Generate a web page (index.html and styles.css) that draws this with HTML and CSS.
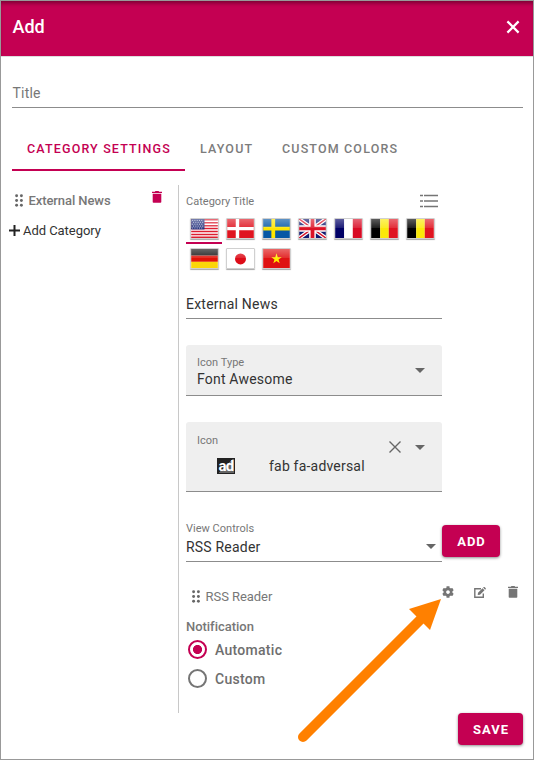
FILE: index.html
```html
<!DOCTYPE html>
<html lang="en">
<head>
<meta charset="utf-8">
<title>Add</title>
<link rel="stylesheet" href="styles.css">
</head>
<body>
<svg class="defs" width="0" height="0" aria-hidden="true">
  <defs>
    <linearGradient id="gloss" x1="0" y1="0" x2="0" y2="1">
      <stop offset="0" stop-color="#fff" stop-opacity=".36"/>
      <stop offset=".5" stop-color="#fff" stop-opacity=".1"/>
      <stop offset=".5" stop-color="#fff" stop-opacity="0"/>
    </linearGradient>
    <symbol id="grip" viewBox="0 0 8 13">
      <circle cx="1.6" cy="1.8" r="1.45"/><circle cx="6.4" cy="1.8" r="1.45"/>
      <circle cx="1.6" cy="6.5" r="1.45"/><circle cx="6.4" cy="6.5" r="1.45"/>
      <circle cx="1.6" cy="11.2" r="1.45"/><circle cx="6.4" cy="11.2" r="1.45"/>
    </symbol>
    <symbol id="trash" viewBox="0 0 10 12">
      <path d="M0 .7h2.9L3.4 0h3.2l.5.7H10V2H0zM.7 2.7h8.6v8.2q0 .8-.8.8h-7q-.8 0-.8-.8z"/>
    </symbol>
    <symbol id="caret" viewBox="0 0 10 5"><path d="M0 0h10L5 5z"/></symbol>
  </defs>
</svg>
<div class="dialog">
  <header class="header">
    <h1>Add</h1>
    <svg class="close" viewBox="0 0 14 14"><path d="M1.4 1.4l11.2 11.2M12.6 1.4L1.4 12.6"/></svg>
  </header>
  <div class="title-field">Title</div>
  <nav class="tabs">
    <a class="tab active">CATEGORY SETTINGS</a>
    <a class="tab layout">LAYOUT</a>
    <a class="tab">CUSTOM COLORS</a>
  </nav>
  <div class="columns">
    <aside class="categories">
      <div class="category">
        <svg class="grip"><use href="#grip"/></svg>
        <span>External News</span>
        <svg class="trash"><use href="#trash"/></svg>
      </div>
      <div class="add-category">
        <svg viewBox="0 0 11 11"><path d="M5.5 0v11M0 5.5h11"/></svg>
        <span>Add Category</span>
      </div>
    </aside>
    <main class="settings">
      <div class="label-row">
        <span class="label">Category Title</span>
        <svg class="list" viewBox="0 0 18 14"><path d="M0 1.5h3M4 1.5h14M0 7h3M4 7h14M0 12.5h3M4 12.5h14"/></svg>
      </div>
      <div class="flags">
        <div class="flag selected"><svg viewBox="0 0 28 20">
          <path fill="#fff" d="M0 0h28v20H0z"/>
          <path stroke="#dc1e30" stroke-width="1.55" d="M0 .8h28M0 3.9h28M0 7h28M0 10h28M0 13.1h28M0 16.2h28M0 19.2h28"/>
          <path fill="#27357f" d="M0 0h14v11H0z"/>
          <path stroke="#c9cde3" stroke-width="1" stroke-dasharray="1 1.4" d="M1 1.5h12M2 3.5h11M1 5.5h12M2 7.5h11M1 9.5h12"/>
          <path class="gloss" d="M0 0h28v20H0z"/></svg></div>
        <div class="flag"><svg viewBox="0 0 28 20">
          <path fill="#df1420" d="M0 0h28v20H0z"/><path fill="#fff" d="M9 0h3.6v20H9zM0 8.3h28v3.5H0z"/>
          <path class="gloss" d="M0 0h28v20H0z"/></svg></div>
        <div class="flag"><svg viewBox="0 0 28 20">
          <path fill="#0657a5" d="M0 0h28v20H0z"/><path fill="#ffe500" d="M8.6 0h4v20h-4zM0 8.2h28v3.8H0z"/>
          <path class="gloss" d="M0 0h28v20H0z"/></svg></div>
        <div class="flag"><svg viewBox="0 0 28 20">
          <path fill="#12196f" d="M0 0h28v20H0z"/><path stroke="#fff" stroke-width="4" d="M0 0l28 20M28 0L0 20"/>
          <path stroke="#d8142a" stroke-width="1.5" d="M0 0l28 20M28 0L0 20"/>
          <path fill="#fff" d="M10.5 0h7v20h-7zM0 6.7h28v6.6H0z"/><path fill="#dc1226" d="M12 0h4v20h-4zM0 8.2h28v3.6H0z"/>
          <path class="gloss" d="M0 0h28v20H0z"/></svg></div>
        <div class="flag"><svg viewBox="0 0 28 20">
          <path fill="#000066" d="M0 0h9.5v20H0z"/><path fill="#fff" d="M9.5 0h9v20h-9z"/><path fill="#d80a24" d="M18.5 0H28v20h-9.5z"/>
          <path class="gloss" d="M0 0h28v20H0z"/></svg></div>
        <div class="flag"><svg viewBox="0 0 28 20">
          <path d="M0 0h9.5v20H0z"/><path fill="#fbe908" d="M9.5 0h9v20h-9z"/><path fill="#df1420" d="M18.5 0H28v20h-9.5z"/>
          <path class="gloss" d="M0 0h28v20H0z"/></svg></div>
        <div class="flag"><svg viewBox="0 0 28 20">
          <path d="M0 0h9.5v20H0z"/><path fill="#fbe908" d="M9.5 0h9v20h-9z"/><path fill="#df1420" d="M18.5 0H28v20h-9.5z"/>
          <path class="gloss" d="M0 0h28v20H0z"/></svg></div>
        <div class="flag"><svg viewBox="0 0 28 20">
          <path fill="#111" d="M0 0h28v7H0z"/><path fill="#e01208" d="M0 7h28v6.5H0z"/><path fill="#fbd60a" d="M0 13.5h28V20H0z"/>
          <path class="gloss" d="M0 0h28v20H0z"/></svg></div>
        <div class="flag"><svg viewBox="0 0 28 20">
          <path fill="#fff" d="M0 0h28v20H0z"/><circle cx="14" cy="10.5" r="5.8" fill="#dd0c18"/>
          <path class="gloss" d="M0 0h28v20H0z"/></svg></div>
        <div class="flag"><svg viewBox="0 0 28 20">
          <path fill="#df1212" d="M0 0h28v20H0z"/>
          <path fill="#fff000" d="M14 4.6l1.3 4h4.2l-3.4 2.5 1.3 4L14 12.600l-3.400 2.500 1.300-4-3.400-2.500h4.200z"/>
          <path class="gloss" d="M0 0h28v20H0z"/></svg></div>
      </div>
      <div class="text-input">External News</div>
      <div class="select filled">
        <div class="select-text">
          <span class="label">Icon Type</span>
          <span class="value">Font Awesome</span>
        </div>
        <svg class="caret"><use href="#caret"/></svg>
      </div>
      <div class="select filled icon-select">
        <div class="select-text">
          <span class="label">Icon</span>
          <div class="icon-value"><span class="ad">ad</span><span class="value">fab fa-adversal</span></div>
        </div>
        <svg class="clear" viewBox="0 0 12 12"><path d="M.5 .5l11 11M11.5 .5l-11 11"/></svg>
        <svg class="caret"><use href="#caret"/></svg>
      </div>
      <div class="view-row">
        <div class="select">
          <div class="select-text">
            <span class="label">View Controls</span>
            <span class="value">RSS Reader</span>
          </div>
          <svg class="caret"><use href="#caret"/></svg>
        </div>
        <button class="btn add">ADD</button>
      </div>
      <div class="control-row">
        <svg class="grip"><use href="#grip"/></svg>
        <span>RSS Reader</span>
        <div class="actions">
          <svg class="gear" viewBox="0 0 512 512"><path d="M487.400 315.700l-42.600-24.600c4.300-23.200 4.300-47 0-70.200l42.600-24.600c4.900-2.800 7.100-8.600 5.500-14-11.100-35.600-30-67.800-54.700-94.600-3.800-4.100-10-5.100-14.800-2.300L380.800 110c-17.900-15.400-38.500-27.300-60.800-35.100V25.800c0-5.600-3.900-10.500-9.400-11.700-36.700-8.200-74.300-7.800-109.200 0-5.500 1.200-9.400 6.100-9.400 11.700V75c-22.200 7.900-42.800 19.800-60.800 35.100L88.700 85.500c-4.900-2.800-11-1.900-14.800 2.300-24.700 26.700-43.600 58.900-54.700 94.600-1.700 5.400.6 11.200 5.500 14L67.300 221c-4.300 23.200-4.300 47 0 70.200l-42.600 24.600c-4.900 2.800-7.100 8.600-5.500 14 11.100 35.600 30 67.800 54.700 94.600 3.800 4.100 10 5.100 14.800 2.300l42.600-24.600c17.900 15.400 38.500 27.300 60.800 35.100v49.200c0 5.600 3.900 10.500 9.400 11.700 36.700 8.200 74.300 7.800 109.200 0 5.500-1.200 9.400-6.100 9.400-11.700v-49.200c22.200-7.900 42.800-19.800 60.800-35.100l42.600 24.600c4.900 2.800 11 1.900 14.800-2.300 24.700-26.700 43.600-58.900 54.700-94.600 1.500-5.500-.7-11.300-5.600-14.100zM256 336c-44.100 0-80-35.900-80-80s35.900-80 80-80 80 35.900 80 80-35.900 80-80 80z"/></svg>
          <svg class="edit" viewBox="0 0 12 11"><path class="outline" d="M7 1.7H.8v8.500h8.500V6.500"/><path d="M4 5.700L8.500 1.200l2 2L6 7.700l-2.300.3zM9.100.6L9.700 0h.8l1.300 1.300v.8l-.7.6z"/></svg>
          <svg class="trash"><use href="#trash"/></svg>
        </div>
      </div>
      <div class="notification">Notification</div>
      <div class="radio checked"><i></i><span>Automatic</span></div>
      <div class="radio"><i></i><span>Custom</span></div>
    </main>
  </div>
  <footer><button class="btn save">SAVE</button></footer>
</div>
<svg class="arrow" viewBox="0 0 144 144"><path class="shaft" d="M6 140L126 20"/><path class="head" d="M144 2l-32 10 21 21z"/></svg>
</body>
</html>
```
FILE: styles.css
```css
* { box-sizing: border-box; }
body { margin: 0; font-family: Roboto, "Liberation Sans", sans-serif; color: #333; background: #fff; }
svg { display: block; flex: none; }
.defs { position: absolute; }
.dialog { width: 534px; height: 760px; border: 1px solid #999; display: flex; flex-direction: column; overflow: hidden; }

.header { height: 56px; flex: none; display: flex; align-items: center; justify-content: space-between; padding: 0 13px 4px 11.5px; background: #c40052; border-bottom: 1px solid #ddd; box-shadow: inset 0 4px 4px -2px rgba(0,0,0,.4); color: #fff; }
.header h1 { margin: 0; font-size: 18px; font-weight: 500; letter-spacing: 0; line-height: 24px; }
.close { width: 14px; height: 14px; fill: none; stroke: #fff; stroke-width: 2.2; }

.title-field { margin: 22px 10px 0 11px; height: 29px; flex: none; border-bottom: 1px solid #8c8c8c; padding-left: .5px; font-size: 14px; line-height: 28px; letter-spacing: .2px; color: #777; }

.tabs { display: flex; flex: none; height: 43px; margin: 20px 0 0 11px; white-space: nowrap; }
.tab { padding: 0 0 0 15px; font-size: 13px; font-weight: 500; line-height: 42px; letter-spacing: 1.3px; color: #7c7c7c; }
.tab { font-size: 12.5px; letter-spacing: 1.15px; }
.tab.active { width: 173px; color: #c40052; border-bottom: 2px solid #c40052; }
.tab.layout { width: 82px; }

.columns { display: flex; height: 528px; flex: none; margin-top: 14px; }
.categories { width: 177px; padding: 7px 0 0 7px; }
.category { display: flex; height: 18px; padding: 0 16px 0 7px; font-size: 13px; font-weight: 500; line-height: 18px; letter-spacing: -.08px; color: #777; }
.grip { width: 8px; height: 13px; margin-top: 2px; margin-right: 5.5px; fill: #666; }
.category .trash { margin-left: auto; margin-top: -1px; }
.trash { width: 10px; height: 12px; fill: #c40052; }
.add-category { display: flex; gap: 3px; margin-top: 12px; padding-left: 1px; font-size: 13px; line-height: 18px; letter-spacing: -.05px; }
.add-category svg { width: 11px; height: 11px; margin-top: 3px; stroke: #222; stroke-width: 2; }

.settings { flex: 1; border-left: 1px solid #c8c8c8; padding-left: 7px; }
.label { font-size: 11px; line-height: 14px; letter-spacing: .02px; color: #777; position: relative; top: 1px; }
.label-row { display: flex; justify-content: space-between; width: 252px; height: 29px; padding-top: 9px; }
.list { width: 18px; height: 14px; stroke: #757575; stroke-width: 1.5; }

.flags { display: flex; flex-wrap: wrap; width: 256px; }
.flag { width: 36px; height: 30px; padding: 4px 0 0 4px; border-bottom: 2px solid transparent; }
.flag.selected { border-color: #c40052; }
.flag svg { width: 29px; height: 21px; border: 1px solid rgba(120,120,120,.35); border-radius: 1px; box-shadow: 0 1px 1px rgba(0,0,0,.35); }
.gloss { fill: url(#gloss); }

.text-input { width: 256px; height: 29px; margin-top: 16px; border-bottom: 1px solid #8c8c8c; font-size: 14px; line-height: 28px; letter-spacing: .22px; }
.select { display: flex; width: 256px; border-bottom: 1px solid #8c8c8c; }
.select-text { flex: 1; display: flex; flex-direction: column; }
.value { font-size: 14px; line-height: 18px; letter-spacing: .2px; color: #333; }
.caret { width: 10px; height: 5px; fill: #666; }
.filled { height: 51px; margin-top: 26px; padding: 10px 17px 0 11px; background: #efefef; border-radius: 3px 3px 0 0; }
.filled .value { margin-top: 1px; }
.filled .caret { margin-top: 13px; }
.icon-select { height: 70px; padding-top: 11px; }
.icon-select .caret { margin-top: 12px; }
.clear { width: 12px; height: 12px; margin: 8px 14px 0 0; fill: none; stroke: #666; stroke-width: 1.4; overflow: visible; }
.icon-value { display: flex; padding: 10px 0 0 20px; }
.icon-value .value { margin: 0 0 0 34px; }
.ad { width: 18px; height: 16px; margin-top: 1px; border: 1px solid #222; background: linear-gradient(135deg, #222 48%, #666 48%); color: #fff; font-size: 15px; font-weight: 700; line-height: 14px; letter-spacing: -.8px; text-align: center; }

.view-row { display: flex; height: 41px; margin-top: 29px; }
.view-row .select { height: 41px; padding-right: 6px; }
.view-row .value { margin-top: 3px; }
.view-row .caret { margin-top: 23px; }
.btn { height: 32px; border: 0; padding: 0 0 0 1px; border-radius: 4px; background: #c40052; color: #fff; font: 700 13px Roboto, sans-serif; letter-spacing: 1px; box-shadow: 0 1px 3px rgba(0,0,0,.45); }
.btn.add { width: 58px; margin-top: 4px; }

.control-row { display: flex; height: 20px; margin-top: 24px; padding-left: 6px; font-size: 13px; line-height: 22px; letter-spacing: -.05px; color: #777; }
.control-row .grip { margin-top: 4px; }
.actions { display: flex; margin-left: auto; padding-right: 15px; align-items: flex-start; fill: #757575; }
.gear { width: 12px; height: 12px; margin-right: 20px; }
.edit { width: 12px; height: 11px; margin: 1px 22px 0 0; }
.outline { fill: none; stroke: #757575; stroke-width: 1.4; }
.actions .trash { fill: #757575; }
.notification { margin-top: 13px; font-size: 13px; font-weight: 500; line-height: 16px; letter-spacing: -.03px; color: #777; }
.radio { display: flex; align-items: center; height: 29px; padding-left: 1.5px; gap: 8.5px; font-size: 14px; font-weight: 500; letter-spacing: .28px; color: #6e6e6e; }
.radio i { width: 19px; height: 19px; border: 2px solid #757575; border-radius: 50%; }
.radio.checked i { border-color: #c40052; background: radial-gradient(circle, #c40052 4.2px, transparent 4.9px); }
footer { display: flex; justify-content: flex-end; padding-right: 10px; }
.btn.save { width: 65px; }
.arrow { position: absolute; left: 297px; top: 597px; width: 144px; height: 144px; overflow: visible; }
.shaft { stroke: #ff8000; stroke-width: 10; stroke-linecap: round; }
.head { fill: #ff8000; }
```
